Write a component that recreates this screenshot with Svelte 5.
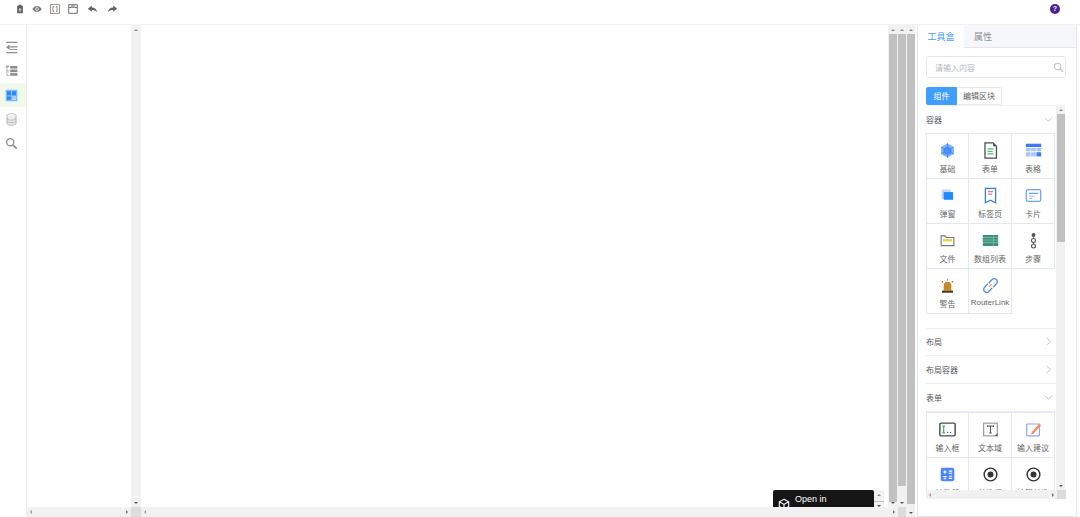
<script>
	const GREY = '#5f6368';

	const toolbar = [
		`<path d="M3 2.500h2V1h4v1.500h2V13H3z" fill="${GREY}"/><path d="M7 11V6.500M5.200 8.200 7 6.400l1.800 1.800" fill="none" stroke="#fff" stroke-width="1.100"/>`,
		`<path d="M.5 7C2.500 3.800 4.600 3 7 3s4.500.8 6.500 4c-2 3.200-4.100 4-6.500 4S2.500 10.200.5 7z" fill="#777"/><circle cx="7" cy="7" r="2.500" fill="#fff"/><circle cx="7" cy="7" r="1.300" fill="#777"/>`,
		`<rect x=".8" y=".8" width="12.400" height="12.400" fill="none" stroke="#9a8f84" stroke-width="1.300"/><path d="M5.500 3.500H4.300v2.800L3.500 7l.8.700v2.800h1.200M8.500 3.500h1.200v2.800l.8.700-.8.700v2.800H8.500" fill="none" stroke="${GREY}" stroke-width="1.100"/>`,
		`<path d="M1 1h12v12H1z" fill="none" stroke="${GREY}" stroke-width="1.300"/><path d="M1 5h12" stroke="${GREY}" stroke-width="1.300"/><path d="M4 1h6v4H4z" fill="#a8a8a8"/>`,
		`<path d="M6 2 .5 6.500 6 11V8.300c3 0 5 .7 7.500 3C13 7.500 10 5 6 5z" fill="${GREY}"/>`,
		`<path d="m8 2 5.500 4.500L8 11V8.300c-3 0-5 .7-7.500 3C1 7.500 4 5 8 5z" fill="${GREY}"/>`
	];

	const rail = [
		`<path d="M2 2h17M7 9h12M2 18h17" stroke="#8c8c8c" stroke-width="1.800" fill="none"/><path d="M7 5.500 1.500 9.500l5.500 4z" fill="#8c8c8c"/><path d="M7 13h12" stroke="#8c8c8c" stroke-width="1.500"/>`,
		`<path d="M3 3v13h4M3 9h4" stroke="#8c8c8c" fill="none"/><rect x="1" y="1" width="5" height="2.500" fill="#a0a0a0"/><rect x="8" y="1.500" width="11" height="4" fill="#8c8c8c"/><rect x="8" y="7" width="11" height="4" fill="#8c8c8c"/><rect x="8" y="12.500" width="11" height="4" fill="#8c8c8c"/>`,
		`<rect x="1" y="1" width="18" height="18" rx="1.500" fill="#7fbcff"/><path d="M3 3.500h6v6H3zM11 3.500h6v6h-6zM3 11.500h6v5H3z" fill="#2f86ee"/><path d="M11 12h6M11 14h6M11 16h6" stroke="#d8ebff"/>`,
		`<ellipse cx="10" cy="4" rx="7" ry="3" fill="none" stroke="#aaa" stroke-width="1.200"/><path d="M3 4v12c0 1.700 3 3 7 3s7-1.300 7-3V4M3 8c0 1.700 3 3 7 3s7-1.300 7-3M3 12c0 1.700 3 3 7 3s7-1.300 7-3" fill="#ececec" stroke="#aaa" stroke-width="1.200"/>`,
		`<circle cx="8" cy="8" r="5.500" fill="none" stroke="#8c8c8c" stroke-width="2"/><path d="m12 12 6 6" stroke="#8c8c8c" stroke-width="2.600"/>`
	];

	const icons = {
		base: `<path d="M10 1.500 17.500 6v8L10 18.500 2.500 14V6z" fill="#7db2ff"/><path d="M10 5.500 14 8v4.500L10 15l-4-2.500V8zM10 1.500v4M10 15v3.500M2.500 6 6 8M17.500 6 14 8M2.500 14 6 12.500M17.500 14 14 12.500" fill="#4a90ff" stroke="#2a72e6" stroke-width=".7"/>`,
		form: `<path d="M3.500 1h9.500l4 4v14h-13.500z" fill="#fff" stroke="#4a4a55" stroke-width="1.500"/><path d="M13 1v4h4" fill="#4a4a55"/><path d="M6.500 8h7M6.500 11h6M6.500 14h7" stroke="#4cc46b" stroke-width="1.500"/>`,
		table: `<rect x="1" y="2" width="18" height="4" fill="#3f7cf0"/><path d="M1 7h5.500v4H1zM7.200 7h5.600v4H7.200zM13.500 7H19v4h-5.500zM1 12h5.500v5H1zM7.200 12h5.600v5H7.200z" fill="#a9c6fb"/><path d="M13.500 12H19v5h-5.500z" fill="#3f7cf0"/>`,
		dialog: `<rect x="3" y="3" width="11" height="11" rx="1" fill="#bcd9ff"/><rect x="5.500" y="6" width="11" height="9" fill="#1e88ff"/>`,
		tabs: `<path d="M4 1.500h12v17l-6-3-6 3z" fill="#fff" stroke="#2f7cf6" stroke-width="1.500"/><path d="M7 5.500h6M7 8.500h5" stroke="#f56fa1" stroke-width="1.500"/>`,
		card: `<rect x="1.500" y="3" width="17" height="14" rx="2" fill="#fff" stroke="#6ea2f5" stroke-width="1.500"/><path d="M4.500 7.500h11" stroke="#6ea2f5" stroke-width="1.500"/><path d="M4.500 11h7M4.500 13.500h4" stroke="#9bbdf5" stroke-width="1.200"/>`,
		file: `<path d="M2.500 4.500h5l1.500 2h8.500V16h-15z" fill="#fff" stroke="#777" stroke-width="1.300"/><path d="M4.500 8.500h11v2.500h-11z" fill="#f7c934"/>`,
		list: `<rect x="1" y="3.500" width="18" height="13" fill="#3d8f7c"/><path d="M1 6.500h18M1 9.500h18M1 12.500h18" stroke="#86c2b0" stroke-width=".9"/><path d="M13.500 3.500v13" stroke="#86c2b0" stroke-width=".7"/>`,
		steps: `<circle cx="10" cy="3.500" r="2.300" fill="#555"/><circle cx="10" cy="10" r="2.300" fill="none" stroke="#555" stroke-width="1.300"/><circle cx="10" cy="16.500" r="2.300" fill="none" stroke="#555" stroke-width="1.300"/><path d="M10 5.500v2.500M10 12v2.500" stroke="#555"/>`,
		alert: `<path d="M5.500 16V10a4.500 4.500 0 0 1 9 0v6z" fill="#c48a2a"/><path d="M3.500 16h13v2.500h-13z" fill="#4a3410"/><path d="M10 2.500v1.700M3.500 5l1.500 1.300M16.500 5 15 6.300" stroke="#c2491d" stroke-width="1.200"/>`,
		link: `<path d="M8.500 11.500 11.500 8.500" stroke="#f2a33a" stroke-width="1.500"/><path d="M8 7 12 3a3 3 0 0 1 5 5l-4 4M12 13l-4 4a3 3 0 0 1-5-5l4-4" fill="none" stroke="#4a8df0" stroke-width="1.500"/>`,
		input: `<rect x="1" y="2.500" width="18" height="15" rx="1.500" fill="#fff" stroke="#4a4a55" stroke-width="1.700"/><path d="M5.500 6v8M4 6h3M4 14h3" stroke="#33b64a" stroke-width="1.400"/><path d="M9.500 13.500h1.300M13 13.500h1.300" stroke="#4a4a55" stroke-width="1.300"/>`,
		textarea: `<rect x="2" y="2.500" width="16" height="15" fill="#fff" stroke="#8a8a8a" stroke-width="1.200"/><path d="M6.500 7V5.800h7V7M10 5.800v8.200M8.500 14h3" fill="none" stroke="#555" stroke-width="1.200"/><path d="M15 17.500h3v-3" fill="#555"/>`,
		suggest: `<rect x="2" y="3.500" width="15" height="14" rx="1" fill="#fff" stroke="#8ea4f5" stroke-width="1.400"/><path d="m8 13 9-10 2 2-9 10-3 1z" fill="#f58d5c"/>`,
		counter: `<rect x="2" y="2" width="16" height="16" rx="2.500" fill="#4a86f7"/><path d="M5 7h4M7 5v4M11.500 6h4M11.500 8.500h4M5 12.500h4M11.500 12h4M11.500 14.500h4M5.500 15h3" stroke="#fff" stroke-width="1.300"/>`,
		radio: `<circle cx="10" cy="10" r="7.500" fill="#fff" stroke="#333" stroke-width="1.700"/><circle cx="10" cy="10" r="3.500" fill="#333"/>`
	};

	const containers = [
		['基础', 'base'],
		['表单', 'form'],
		['表格', 'table'],
		['弹窗', 'dialog'],
		['标签页', 'tabs'],
		['卡片', 'card'],
		['文件', 'file'],
		['数组列表', 'list'],
		['步骤', 'steps'],
		['警告', 'alert'],
		['RouterLink', 'link']
	];
	const formItems = [
		['输入框', 'input'],
		['文本域', 'textarea'],
		['输入建议', 'suggest'],
		['计数器', 'counter'],
		['单选框', 'radio'],
		['按钮单选', 'radio']
	];
</script>

{#snippet grid(items)}
	<div class="grid">
		{#each items as [label, icon]}
			<div class="cell">
				<svg class="cell-icon" viewBox="0 0 20 20">{@html icons[icon]}</svg>
				<span>{label}</span>
			</div>
		{/each}
	</div>
{/snippet}

{#snippet vbar(thumbEnd, cls = '')}
	<div class="vbar {cls}">
		<i class="arr up"></i>
		{#if thumbEnd}<div class="thumb" style="height:{thumbEnd}px"></div>{/if}
		<i class="arr down"></i>
	</div>
{/snippet}

{#snippet chevron(open)}
	<svg class="chev" viewBox="0 0 10 10">
		<path d={open ? 'M1 3l4 4 4-4' : 'M3 1l4 4-4 4'} fill="none" stroke="#a8abb2" stroke-width=".8" />
	</svg>
{/snippet}

<div class="page">
	<header class="topbar">
		<div class="tools">
			{#each toolbar as t}
				<svg class="tool" viewBox="0 0 14 14">{@html t}</svg>
			{/each}
		</div>
		<div class="help">?</div>
	</header>

	<div class="body">
		<nav class="rail">
			{#each rail as r, i}
				<div class="rail-item" class:active={i === 2}>
					<svg viewBox="0 0 20 20">{@html r}</svg>
				</div>
			{/each}
		</nav>

		<div class="work">
			<div class="panes">
				<div class="tree"></div>
				{@render vbar(0)}
				<div class="canvas">
					<div class="badge">
						<svg viewBox="0 0 14 14" class="badge-icon">
							<path d="M7 1.500 12.500 4.500v5.500L7 13 1.500 10V4.500zM1.500 4.500 7 7.500l5.500-3M7 7.500V13" fill="none" stroke="#fff" stroke-width="1.300" />
						</svg>
						<div class="badge-text">Open in<br />CodeSandbox</div>
						<div class="badge-scroll">
							<i class="arr up"></i>
							<div class="thumb mini"></div>
							<i class="arr down"></i>
						</div>
					</div>
				</div>
				{@render vbar(468, 'w9')}
				{@render vbar(452, 'w9')}
			</div>
			<div class="hrow">
				<div class="hbar left"><i class="arr lt"></i><i class="arr rt"></i></div>
				<div class="corner c10"></div>
				<div class="hbar main"><i class="arr lt"></i><i class="arr rt"></i></div>
				<div class="corner c8"></div>
			</div>
		</div>

		{@render vbar(470, 'w9 tall')}

		<aside class="side">
			<div class="tabs">
				<div class="tab on">工具盒</div>
				<div class="tab">属性</div>
			</div>
			<div class="side-body">
				<div class="search">
					<span>请输入内容</span>
					<svg viewBox="0 0 12 12">
						<circle cx="5" cy="5" r="3.600" fill="none" stroke="#c0c4cc" stroke-width="1.200" />
						<path d="m7.700 7.700 3.300 3.300" stroke="#c0c4cc" stroke-width="1.600" />
					</svg>
				</div>
				<div class="btns">
					<div class="btn on">组件</div>
					<div class="btn">编辑区块</div>
				</div>
				<div class="scroller">
					<div class="scroll-row">
						<div class="list">
							<div class="head first">容器{@render chevron(true)}</div>
							{@render grid(containers)}
							<div class="head gap">布局{@render chevron(false)}</div>
							<div class="head">布局容器{@render chevron(false)}</div>
							<div class="head">表单{@render chevron(true)}</div>
							{@render grid(formItems)}
						</div>
						<div class="vbar w9 inner">
							<i class="arr up"></i>
							<div class="thumb" style="height:128px"></div>
							<i class="arr down"></i>
						</div>
					</div>
					<div class="side-h">
						<div class="hbar"><i class="arr lt"></i><i class="arr rt"></i></div>
						<div class="corner c9"></div>
					</div>
				</div>
			</div>
		</aside>
	</div>
</div>

<style>
	:global(body) {
		margin: 0;
		background: #fff;
	}
	.page {
		width: 1080px;
		height: 517px;
		overflow: hidden;
		display: flex;
		flex-direction: column;
		font-family: 'Liberation Sans', 'Noto Sans CJK SC', sans-serif;
		color: #606266;
	}
	.topbar {
		flex: none;
		display: flex;
		align-items: flex-start;
		justify-content: space-between;
		border-bottom: 1px solid #f1f1f6;
		padding: 4px 20px 0 15px;
		height: 20px;
	}
	.tools {
		display: flex;
		gap: 8px;
	}
	.tool {
		width: 10px;
		height: 10px;
	}
	.tool:nth-child(2) {
		margin-left: -1px;
	}
	.tool:nth-child(5) {
		margin-left: 1px;
		width: 11px;
	}
	.tool:nth-child(6) {
		margin-left: 1px;
		width: 11px;
	}
	.help {
		width: 10px;
		height: 10px;
		border-radius: 50%;
		background: #4b1f96;
		color: #fff;
		font-size: 7px;
		font-weight: 700;
		line-height: 10px;
		text-align: center;
	}
	.body {
		flex: 1;
		display: flex;
		min-height: 0;
	}
	.rail {
		width: 26px;
		flex: none;
		border-right: 1px solid #eceef2;
		box-sizing: content-box;
		padding-top: 10px;
	}
	.rail-item {
		height: 24px;
		display: flex;
		align-items: center;
		justify-content: center;
		padding-right: 4px;
	}
	.rail-item.active {
		background: #f0f9eb;
	}
	.rail-item svg {
		width: 13px;
		height: 13px;
	}
	.work {
		width: 879px;
		flex: none;
		display: flex;
		flex-direction: column;
	}
	.panes {
		flex: 1;
		display: flex;
		min-height: 0;
	}
	.tree {
		width: 104px;
		flex: none;
	}
	.canvas {
		width: 747px;
		flex: none;
		position: relative;
		overflow: hidden;
	}
	.vbar {
		width: 10px;
		flex: none;
		background: #f1f1f1;
		display: flex;
		flex-direction: column;
		align-items: center;
		position: relative;
	}
	.vbar.w9 {
		width: 9px;
	}
	.vbar.tall {
		height: 100%;
		margin-right: 2px;
	}
	.thumb {
		width: 100%;
		background: #c1c1c1;
		margin-top: 3px;
		border-left: 1px solid #f1f1f1;
		box-sizing: border-box;
	}
	.arr {
		display: block;
		width: 0;
		height: 0;
		border: 2.500px solid transparent;
		flex: none;
	}
	.arr.up {
		border-bottom-color: #8a8a8a;
		border-top-width: 0;
		margin-top: 4px;
	}
	.arr.down {
		border-top-color: #555;
		border-bottom-width: 0;
		margin-top: auto;
		margin-bottom: 3px;
	}
	.arr.lt {
		border-right-color: #9a9a9a;
		border-left-width: 0;
	}
	.arr.rt {
		border-left-color: #707070;
		border-right-width: 0;
	}
	.hrow {
		height: 10px;
		flex: none;
		display: flex;
	}
	.hbar {
		background: #f1f1f1;
		display: flex;
		align-items: center;
		justify-content: space-between;
		padding: 0 3px;
		box-sizing: border-box;
		flex: 1;
	}
	.hbar.left {
		flex: none;
		width: 104px;
	}
	.corner {
		background: #dcdcdc;
		flex: none;
	}
	.c10 {
		width: 10px;
	}
	.c8 {
		width: 8px;
	}
	.c9 {
		width: 9px;
	}
	.badge {
		position: absolute;
		left: 632px;
		top: 465px;
		width: 101px;
		height: 30px;
		background: #151515;
		border-radius: 2px;
		color: #fff;
		font-size: 9px;
	}
	.badge-icon {
		position: absolute;
		left: 5px;
		top: 8px;
		width: 12px;
		height: 12px;
	}
	.badge-text {
		position: absolute;
		left: 22px;
		top: 3px;
		line-height: 12px;
		white-space: nowrap;
	}
	.badge-scroll {
		position: absolute;
		left: 101px;
		top: 0;
		width: 10px;
		height: 17px;
		background: #f1f1f1;
		display: flex;
		flex-direction: column;
		align-items: center;
		overflow: hidden;
	}
	.thumb.mini {
		height: 3px;
		margin-top: 5px;
		border: 0;
	}
	.badge-scroll .arr.down {
		margin-top: 3px;
		margin-bottom: 0;
	}
	.side {
		width: 158px;
		flex: none;
		border-right: 1px solid #e4e7ed;
		border-bottom: 1px solid #e4e7ed;
		border-left: 1px solid #e4e7ed;
		display: flex;
		flex-direction: column;
		min-height: 0;
	}
	.tabs {
		display: flex;
		height: 22px;
		flex: none;
		background: #f5f7fa;
		border-bottom: 1px solid #e4e7ed;
	}
	.tab {
		width: 38px;
		font-size: 9px;
		line-height: 24px;
		text-align: center;
		color: #8c8f96;
	}
	.tab.on {
		width: 46px;
		background: #fff;
		color: #409eff;
		height: 23px;
	}
	.side-body {
		flex: 1;
		min-height: 0;
		padding: 8px 10px 0 8px;
		display: flex;
		flex-direction: column;
	}
	.search {
		height: 22px;
		flex: none;
		border: 1px solid #e4e7ed;
		border-radius: 3px;
		display: flex;
		align-items: center;
		justify-content: space-between;
		padding: 0 1px 0 8px;
		box-sizing: border-box;
		font-size: 8px;
		color: #b4b8c0;
	}
	.search svg {
		width: 11px;
		height: 11px;
	}
	.btns {
		display: flex;
		margin-top: 9px;
		flex: none;
	}
	.btn {
		height: 18px;
		line-height: 17px;
		box-sizing: border-box;
		width: 45px;
		font-size: 8px;
		text-align: center;
		color: #606266;
		border: 1px solid #e4e7ed;
		border-left: 0;
		border-radius: 0 2px 2px 0;
	}
	.btn.on {
		width: 31px;
		background: #409eff;
		border: 1px solid #409eff;
		color: #fff;
		border-radius: 2px 0 0 2px;
	}
	.scroller {
		height: 394px;
		flex: none;
		display: flex;
		flex-direction: column;
	}
	.scroll-row {
		height: 385px;
		display: flex;
		overflow: hidden;
		flex: none;
	}
	.list {
		width: 130px;
		flex: none;
		overflow: hidden;
		border-top: 1px solid #f0f1f4;
		box-sizing: border-box;
	}
	.vbar.inner {
		height: 100%;
	}
	.head {
		height: 26px;
		padding-bottom: 1px;
		display: flex;
		align-items: center;
		justify-content: space-between;
		font-size: 8px;
		color: #555;
		border-bottom: 1px solid #ebeef5;
	}
	.head.first {
		border-bottom: 0;
	}
	.head.gap {
		height: 25px;
		margin-top: 14px;
		border-top: 1px solid #ebeef5;
	}
	.head:last-of-type {
		border-bottom: 0;
	}
	.chev {
		width: 9px;
		height: 9px;
		margin-right: 3px;
	}
	.grid {
		display: grid;
		grid-template-columns: 42px 43px 43px;
		grid-auto-rows: 45px;
		border-top: 1px solid #e4e7ed;
		border-left: 1px solid #e4e7ed;
		width: fit-content;
	}
	.cell {
		border-right: 1px solid #e4e7ed;
		border-bottom: 1px solid #e4e7ed;
		box-sizing: border-box;
		display: flex;
		flex-direction: column;
		align-items: center;
		padding-top: 8px;
		font-size: 8px;
		color: #666;
		white-space: nowrap;
	}
	.cell-icon {
		width: 17px;
		height: 17px;
		margin-bottom: 4px;
		flex: none;
	}
	.side-h {
		height: 9px;
		display: flex;
		flex: none;
	}
</style>
